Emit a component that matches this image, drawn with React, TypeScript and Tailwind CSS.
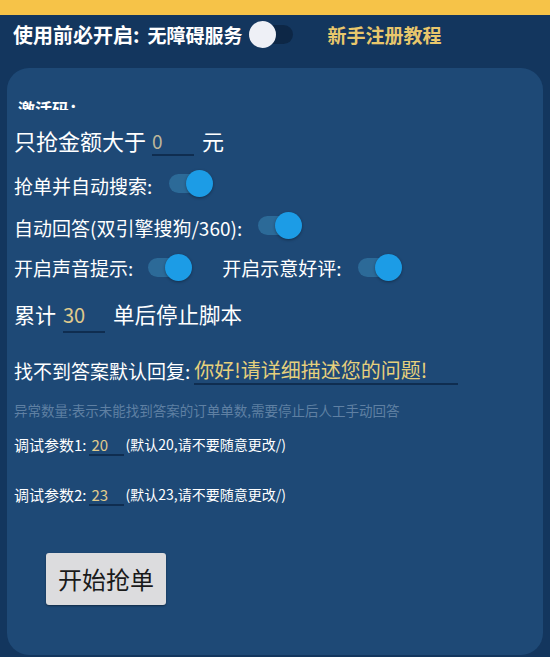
import React from "react";

const font = { fontFamily: '"Noto Sans CJK SC", "Noto Sans", sans-serif' };

function Toggle() {
  return (
    <span className="relative inline-block w-[44px] h-[27px] shrink-0">
      <span className="absolute left-0 top-[4px] w-[36px] h-[19px] rounded-full bg-[#2c6a98]" />
      <span className="absolute right-0 top-0 w-[27px] h-[27px] rounded-full bg-[#1c9ce6] shadow-[0_1px_3px_rgba(0,0,0,0.35)]" />
    </span>
  );
}

export default function App() {
  return (
    <div style={font} className="w-[550px] h-[657px] overflow-hidden bg-[#13365e] flex flex-col">
      <div className="h-[15px] bg-[#f6c348] shrink-0" />
      <div className="h-[39px] flex items-center pl-[13px] shrink-0">
        <span className="text-[20px] font-bold text-white leading-none">使用前必开启:</span>
        <span className="ml-[8px] text-[19px] font-bold text-white leading-none">无障碍服务</span>
        <span className="relative inline-block w-[44px] h-[27px] ml-[6px]">
          <span className="absolute left-[5px] top-[4px] w-[39px] h-[19px] rounded-full bg-[#0d2746]" />
          <span className="absolute left-0 top-0 w-[27px] h-[27px] rounded-full bg-[#eef0f6]" />
        </span>
        <span className="ml-[35px] text-[19px] font-bold text-[#e8c76c] leading-none">新手注册教程</span>
      </div>
      <div className="mt-[14px] mx-[7px] flex-1 rounded-[22px] bg-[#1e4976] flex flex-col pl-[7px] mb-[2px]">
        <div className="mt-[31px] h-[11px] overflow-hidden pl-[4px]">
          <span className="text-[17px] font-bold text-white leading-[19px] block">激活码：</span>
        </div>
        <div className="mt-[10px] h-[40px] flex items-center text-white">
          <span className="text-[22px] leading-none">只抢金额大于</span>
          <span className="ml-[6px] w-[42px] h-[30px] flex items-center border-b-2 border-[#0f2d50] text-[19px] text-[#bdb69a] leading-none mt-[2px]">0</span>
          <span className="ml-[8px] text-[22px] leading-none">元</span>
        </div>
        <div className="h-[50px] flex items-center text-white">
          <span className="text-[19px] leading-none">抢单并自动搜索:</span>
          <span className="ml-[17px] -mt-[3px] flex"><Toggle /></span>
        </div>
        <div className="h-[34px] flex items-center text-white">
          <span className="text-[19px] leading-none">自动回答(双引擎搜狗/360):</span>
          <span className="ml-[16px] -mt-[3px] flex"><Toggle /></span>
        </div>
        <div className="h-[46px] flex items-center text-white">
          <span className="text-[19px] leading-none">开启声音提示:</span>
          <span className="ml-[15px] flex"><Toggle /></span>
          <span className="ml-[30px] text-[19px] leading-none">开启示意好评:</span>
          <span className="ml-[16px] flex"><Toggle /></span>
        </div>
        <div className="h-[48px] flex items-center text-white">
          <span className="text-[21px] leading-none">累计</span>
          <span className="ml-[7px] w-[42px] h-[34px] flex items-center border-b-2 border-[#0f2d50] text-[20px] text-[#e0cb8c] leading-none mt-[4px]">30</span>
          <span className="ml-[8px] text-[21.5px] leading-none">单后停止脚本</span>
        </div>
        <div className="h-[64px] flex items-center text-white">
          <span className="text-[19px] leading-none">找不到答案默认回复:</span>
          <span className="ml-[4px] w-[264px] h-[28px] flex items-center border-b-2 border-[#0f2d50] text-[20px] text-[#e6d07c] leading-none mt-[2px]">你好!请详细描述您的问题!</span>
        </div>
        <div className="h-[18px] flex items-center">
          <span className="text-[13.5px] leading-none text-[#5f80a3]">异常数量:表示未能找到答案的订单单数,需要停止后人工手动回答</span>
        </div>
        <div className="h-[48px] flex items-center text-white">
          <span className="text-[15px] leading-none">调试参数1:</span>
          <span className="ml-[2px] w-[35px] h-[22px] flex items-center pl-[3px] border-b-2 border-[#0f2d50] text-[15px] text-[#e0cb8c] leading-none mt-[2px]">20</span>
          <span className="ml-[2px] text-[14px] leading-none">(默认20,请不要随意更改/)</span>
        </div>
        <div className="h-[52px] flex items-center text-white">
          <span className="text-[15px] leading-none">调试参数2:</span>
          <span className="ml-[2px] w-[35px] h-[22px] flex items-center pl-[3px] border-b-2 border-[#0f2d50] text-[15px] text-[#e0cb8c] leading-none mt-[2px]">23</span>
          <span className="ml-[2px] text-[14px] leading-none">(默认23,请不要随意更改/)</span>
        </div>
        <div className="mt-[33px] ml-[32px]">
          <button className="w-[120px] h-[52px] rounded-[3px] bg-[#dcdcde] text-[#1a1a1a] text-[24px] leading-none shadow-[0_1px_2px_rgba(0,0,0,0.4)]">开始抢单</button>
        </div>
      </div>
    </div>
  );
}
